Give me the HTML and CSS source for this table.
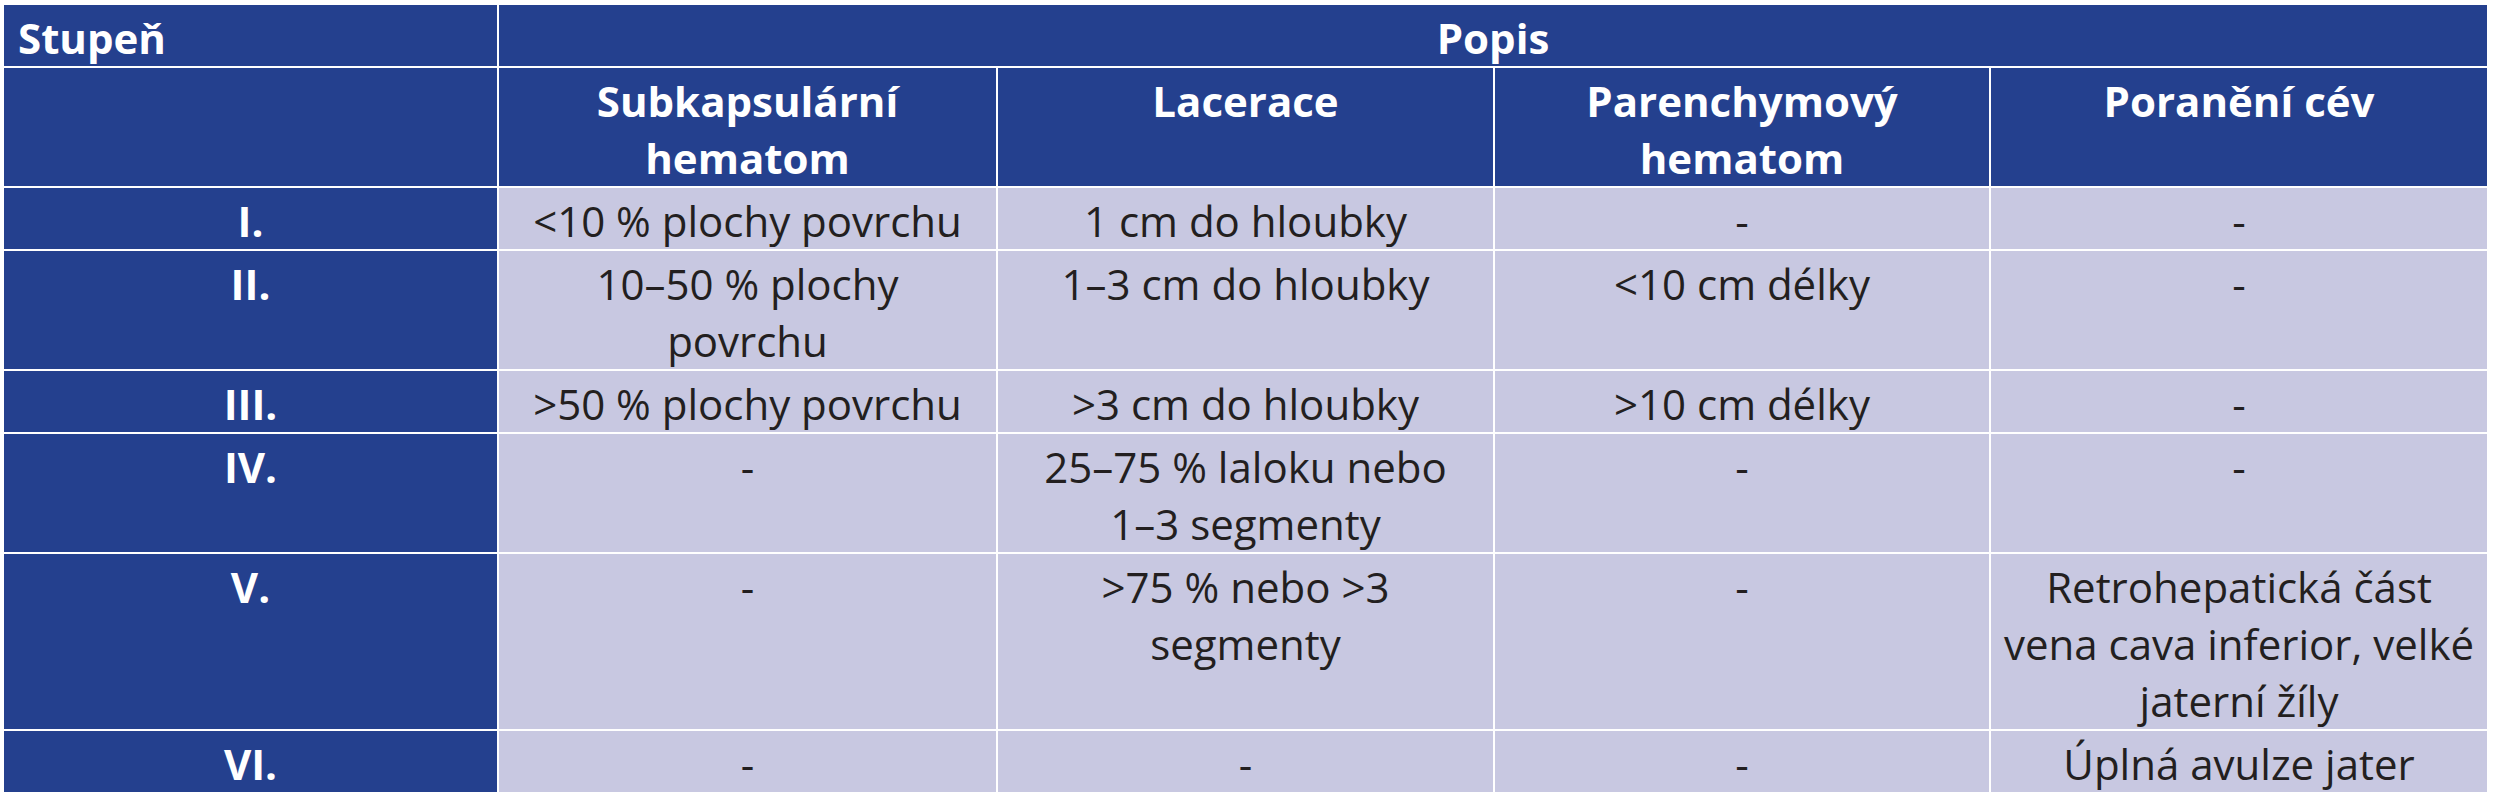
FILE: index.html
```html
<!DOCTYPE html>
<html lang="cs">
<head>
<meta charset="utf-8">
<title>Stupně poranění jater</title>
<link rel="stylesheet" href="styles.css">
</head>
<body>
<table class="grade-table">
  <colgroup>
    <col class="c1"><col class="c2"><col class="c3"><col class="c4"><col class="c5">
  </colgroup>
  <thead>
    <tr>
      <th class="hd hd-left">Stupeň</th>
      <th class="hd" colspan="4">Popis</th>
    </tr>
    <tr>
      <th class="hd"></th>
      <th class="hd">Subkapsulární<br>hematom</th>
      <th class="hd">Lacerace</th>
      <th class="hd">Parenchymový<br>hematom</th>
      <th class="hd">Poranění cév</th>
    </tr>
  </thead>
  <tbody>
    <tr>
      <th class="grade">I.</th>
      <td>&lt;10 % plochy povrchu</td>
      <td>1 cm do hloubky</td>
      <td>-</td>
      <td>-</td>
    </tr>
    <tr>
      <th class="grade">II.</th>
      <td>10–50 % plochy<br>povrchu</td>
      <td>1–3 cm do hloubky</td>
      <td>&lt;10 cm délky</td>
      <td>-</td>
    </tr>
    <tr>
      <th class="grade">III.</th>
      <td>&gt;50 % plochy povrchu</td>
      <td>&gt;3 cm do hloubky</td>
      <td>&gt;10 cm délky</td>
      <td>-</td>
    </tr>
    <tr>
      <th class="grade">IV.</th>
      <td>-</td>
      <td>25–75 % laloku nebo<br>1–3 segmenty</td>
      <td>-</td>
      <td>-</td>
    </tr>
    <tr>
      <th class="grade">V.</th>
      <td>-</td>
      <td>&gt;75 % nebo &gt;3<br>segmenty</td>
      <td>-</td>
      <td>Retrohepatická část<br>vena cava inferior, velké<br>jaterní žíly</td>
    </tr>
    <tr>
      <th class="grade">VI.</th>
      <td>-</td>
      <td>-</td>
      <td>-</td>
      <td>Úplná avulze jater</td>
    </tr>
  </tbody>
</table>
</body>
</html>
```

FILE: styles.css
```css
html, body {
  margin: 0;
  padding: 0;
  background: #ffffff;
}

body {
  padding: 3px 0 0 2px;
  font-family: "Open Sans", "Liberation Sans", sans-serif;
}

.grade-table {
  width: 2485px;
  table-layout: fixed;
  border-collapse: separate;
  border-spacing: 2px;
  background: #ffffff;
  font-size: 42px;
  line-height: 57px;
}

.c1 { width: 493px; }
.c2 { width: 497px; }
.c3 { width: 495px; }
.c4 { width: 494px; }
.c5 { width: 496px; }

.grade-table th,
.grade-table td {
  padding: 4px 6px 0;
  vertical-align: top;
  text-align: center;
  white-space: nowrap;
}

.grade-table td {
  background: #c8c8e1;
  color: #231f20;
  font-weight: 400;
}

.grade-table .hd,
.grade-table .grade {
  background: #24408e;
  color: #ffffff;
  font-weight: 700;
}

.grade-table .hd-left {
  text-align: left;
  padding-left: 14px;
}
```
